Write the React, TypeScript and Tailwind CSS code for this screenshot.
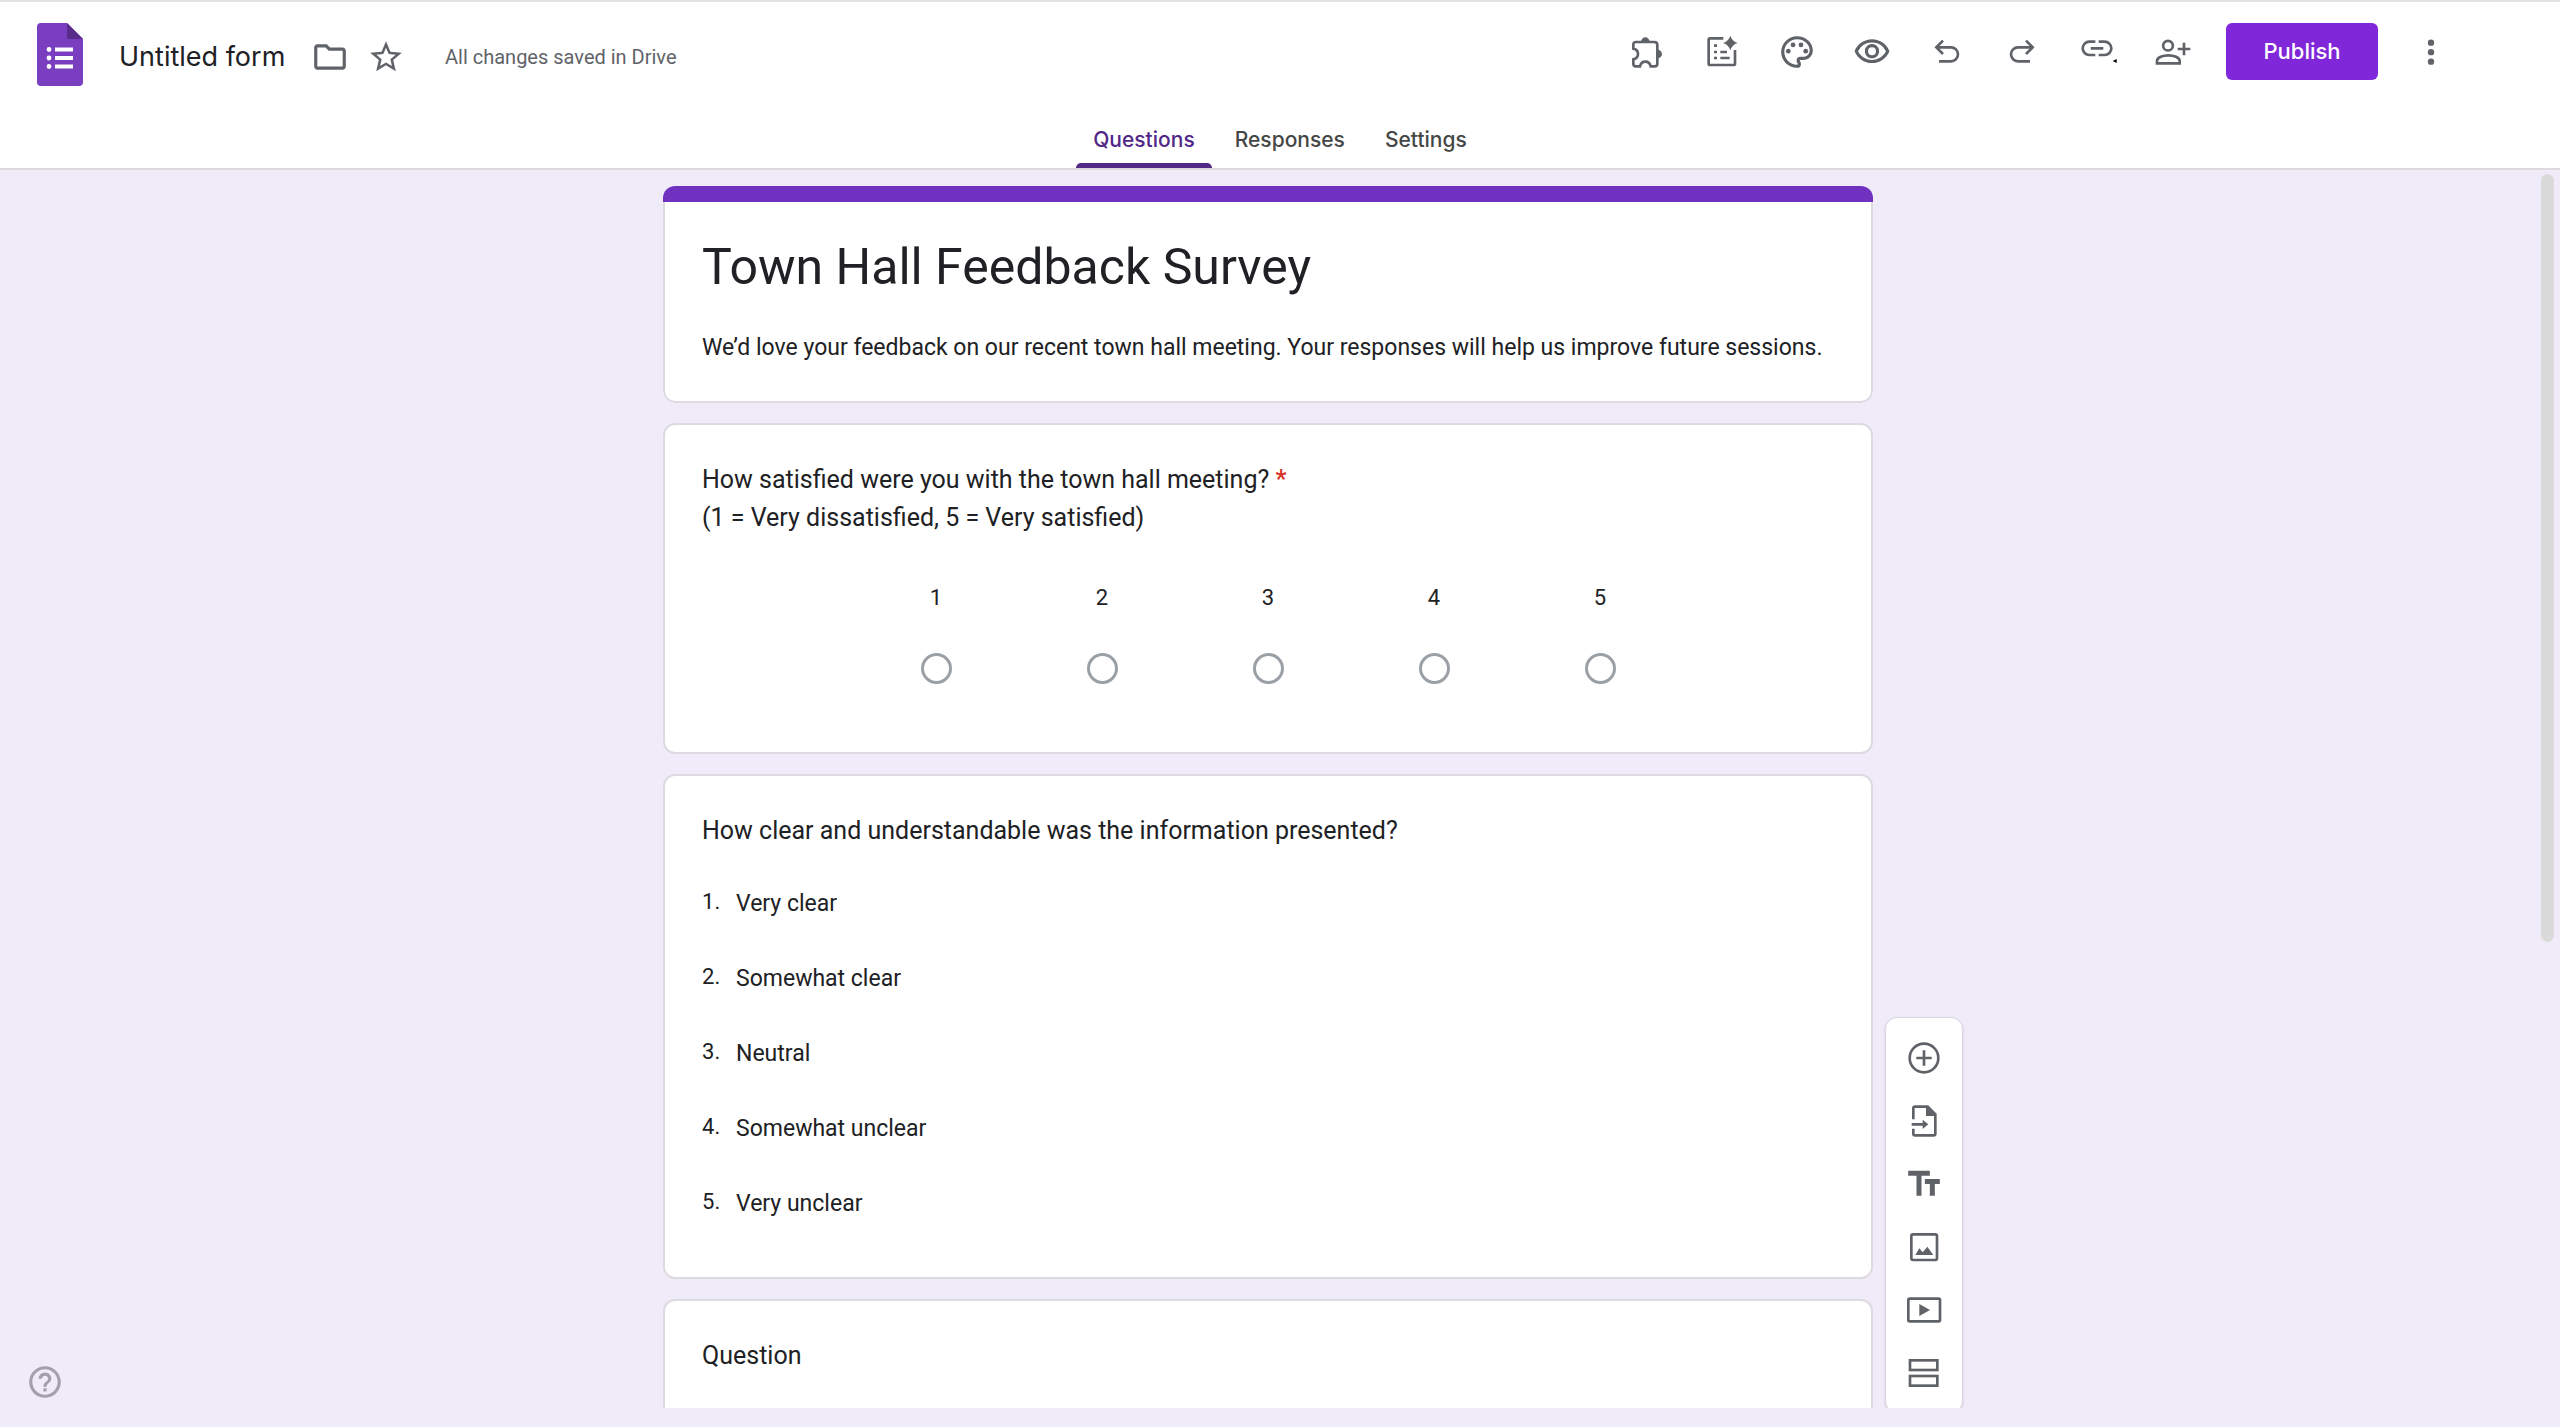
import React from "react";
import {
  MdHelpOutline,
  MdOutlineFolder,
  MdOutlinePalette,
  MdOutlineVisibility,
  MdStarBorder,
  MdTextFields,
} from "react-icons/md";

type IconProps = { viewBox: string; children: React.ReactNode };

function Icon({ viewBox, children }: IconProps) {
  return (
    <svg viewBox={viewBox} className="size-10" fill="none" stroke="currentColor" strokeWidth={8} aria-hidden="true">
      {children}
    </svg>
  );
}

const FormsLogo = () => (
  <svg viewBox="0 0 46 63" className="w-[46px] h-[63px]" aria-hidden="true">
    <path d="M4 0H30L46 16V59A4 4 0 0 1 42 63H4A4 4 0 0 1 0 59V4A4 4 0 0 1 4 0Z" fill="#7a3fc0" />
    <path d="M30 0L46 16H30Z" fill="#592c8c" />
    <g fill="#fff">
      <circle cx="12" cy="26.5" r="2.4" />
      <circle cx="12" cy="35" r="2.4" />
      <circle cx="12" cy="43.5" r="2.4" />
      <rect x="18" y="24.5" width="18" height="4" />
      <rect x="18" y="33" width="18" height="4" />
      <rect x="18" y="41.5" width="18" height="4" />
    </g>
  </svg>
);

const Puzzle = () => (
  <Icon viewBox="78 95 120 120">
    <path d="M105 125H160Q169 125 169 134V190Q169 198 160 198H149C147 189 141 184 133 184C125 184 119 189 117 198H105Q97 198 97 190V177C106 175 111 169 111 161C111 153 106 147 97 145V133Q97 125 105 125Z" />
    <path d="M120 125A13 14 0 0 1 146 125ZM169 148A14 13 0 0 1 169 174Z" fill="currentColor" stroke="none" />
  </Icon>
);

const FormSparkle = () => (
  <Icon viewBox="301 95 120 120">
    <path d="M365 114H325Q321 114 321 118V190Q321 194 325 194H395Q400 194 400 190V149" />
    <path d="M386 106Q391 123 408 128Q391 133 386 150Q381 133 364 128Q381 123 386 106Z" fill="currentColor" stroke="none" />
    <path d="M337 136H346M337 155H346M337 173H346M356 155H376M356 173H384" />
  </Icon>
);

const Undo = () => (
  <Icon viewBox="980 95 120 120">
    <path d="M1016 183H1052A21 21 0 0 0 1052 141H1008M1028 121L1008 141L1028 161" />
  </Icon>
);

const Redo = () => (
  <Icon viewBox="1204 95 120 120">
    <path d="M1288 183H1252A21 21 0 0 1 1252 141H1296M1276 121L1296 141L1276 161" />
  </Icon>
);

const LinkIcon = () => (
  <Icon viewBox="112 95 120 120">
    <path d="M167 124H149A20 20 0 0 0 149 164H167M177 124H195A20 20 0 0 1 195 164H177M153 144H191" />
    <path d="M219 182L231 176V188Z" fill="#000" stroke="none" />
  </Icon>
);

const PersonAdd = () => (
  <Icon viewBox="336 95 120 120">
    <circle cx="384" cy="136" r="14.5" />
    <path d="M351 189V182C351 171 369 165 385 165C401 165 419 171 419 182V189ZM413 146H451M432 127V165" />
  </Icon>
);

const Kebab = () => (
  <Icon viewBox="1113 95 120 120">
    <g fill="currentColor" stroke="none">
      <circle cx="1173" cy="127" r="9.5" />
      <circle cx="1173" cy="155.5" r="9.5" />
      <circle cx="1173" cy="184" r="9.5" />
    </g>
  </Icon>
);

const AddCircle = () => (
  <Icon viewBox="193 111 120 120">
    <circle cx="253" cy="171" r="43" />
    <path d="M230 171H276M253 148V194" />
  </Icon>
);

const ImportDoc = () => (
  <Icon viewBox="193 300 120 120">
    <path d="M221 355V322Q221 317 226 317H264L287 340V398Q287 403 282 403H226Q221 403 221 398V383M216 370H252" />
    <path d="M259 316V345H288ZM249 356L266 370L249 384Z" fill="currentColor" stroke="none" />
  </Icon>
);

const Picture = () => (
  <Icon viewBox="193 678 120 120">
    <rect x="215" y="700" width="77" height="77" rx="5" />
    <path d="M227 762L239 742L249 754L263 737L281 762Z" fill="currentColor" stroke="none" />
  </Icon>
);

const Video = () => (
  <Icon viewBox="193 865 120 120">
    <rect x="206" y="891" width="95" height="68" rx="4" />
    <path d="M239 907L271 925L239 943Z" fill="currentColor" stroke="none" />
  </Icon>
);

const Sections = () => (
  <Icon viewBox="193 1053 120 120">
    <rect x="211" y="1075" width="82" height="29" />
    <rect x="211" y="1122" width="82" height="29" />
  </Icon>
);

const headerActions = [
  { label: "Add-ons", icon: <Puzzle /> },
  { label: "Create with AI", icon: <FormSparkle /> },
  { label: "Customize theme", icon: <MdOutlinePalette className="size-[38px]" /> },
  { label: "Preview", icon: <MdOutlineVisibility className="size-[38px]" /> },
  { label: "Undo", icon: <Undo /> },
  { label: "Redo", icon: <Redo /> },
  { label: "Copy responder link", icon: <LinkIcon /> },
  { label: "Share", icon: <PersonAdd /> },
];

const toolbarActions = [
  { label: "Add question", icon: <AddCircle /> },
  { label: "Import questions", icon: <ImportDoc /> },
  { label: "Add title and description", icon: <MdTextFields className="size-10" /> },
  { label: "Add image", icon: <Picture /> },
  { label: "Add video", icon: <Video /> },
  { label: "Add section", icon: <Sections /> },
];

const options = ["Very clear", "Somewhat clear", "Neutral", "Somewhat unclear", "Very unclear"];

function Card({ children }: { children: React.ReactNode }) {
  return (
    <section className="shrink-0 rounded-xl border-2 border-[#dddae2] bg-white px-[37px] text-[25px] leading-[38px]">
      {children}
    </section>
  );
}

function Header() {
  return (
    <header className="relative border-y-2 border-t-[#e2e2e2] border-b-[#dcdadf] bg-white text-[#5f6368]">
      <div className="flex items-start justify-between pt-[21px] pr-[109px] pl-[37px]">
        <div className="flex items-center">
          <FormsLogo />
          <div className="flex items-center pt-1">
            <input
              aria-label="Form name"
              defaultValue="Untitled form"
              className="ml-9 w-[186px] bg-transparent font-['Inter'] text-[27px] leading-9 text-[#202124] outline-none"
            />
            <button aria-label="Move to folder" className="ml-1.5">
              <MdOutlineFolder className="size-[38px]" />
            </button>
            <button aria-label="Star" className="ml-[18px]">
              <MdStarBorder className="size-[38px]" />
            </button>
            <span className="ml-10 text-xl">All changes saved in Drive</span>
          </div>
        </div>
        <div className="flex items-center">
          {headerActions.map((a) => (
            <button key={a.label} aria-label={a.label} className="flex w-[75px] justify-center">
              {a.icon}
            </button>
          ))}
          <button className="ml-[17px] h-[57px] w-[152px] rounded-md bg-[#8027d9] font-['Inter'] text-[22px] font-medium text-white">
            Publish
          </button>
          <button aria-label="More options" className="ml-[33px]">
            <Kebab />
          </button>
        </div>
      </div>
      <nav className="mt-[26px] flex h-[56px] justify-center font-['Inter'] text-[21px] font-medium text-[#444746]" role="tablist">
        <button role="tab" aria-selected="true" className="relative px-5 text-[#512888]">
          Questions
          <span className="absolute inset-x-[3px] bottom-0 h-[5px] rounded-t-md bg-[#512888]" />
        </button>
        <button role="tab" aria-selected="false" className="px-5">Responses</button>
        <button role="tab" aria-selected="false" className="px-5">Settings</button>
      </nav>
    </header>
  );
}

export default function App() {
  return (
    <div className="flex h-screen flex-col overflow-hidden bg-[#f0ebf8] pb-[19px] font-['Roboto',sans-serif] text-[#202124]">
      <Header />
      <main className="relative grid min-h-0 flex-1 grid-cols-[1fr_minmax(0,1210px)_1fr] grid-rows-[minmax(0,1fr)] overflow-hidden pr-6">
        <div className="col-start-2 flex flex-col gap-5 pt-4">
          <section className="shrink-0 overflow-hidden rounded-xl bg-white">
            <div className="h-4 bg-[#7030c0]" />
            <div className="rounded-b-xl border-2 border-t-0 border-[#dddae2] px-[37px] pt-8 pb-[34px]">
              <h1 className="text-[50px] leading-[66px]">Town Hall Feedback Survey</h1>
              <p className="mt-[29px] text-[23px] leading-[38px]">
                We’d love your feedback on our recent town hall meeting. Your responses will help us improve future
                sessions.
              </p>
            </div>
          </section>

          <Card>
            <fieldset className="pt-9 pb-[68px]">
              <legend className="float-left w-full">
                How satisfied were you with the town hall meeting? <span className="font-medium text-[#d93025]">*</span>
                <br />
                (1 = Very dissatisfied, 5 = Very satisfied)
              </legend>
              <div className="clear-both flex justify-center pt-[42px]">
                {[1, 2, 3, 4, 5].map((n) => (
                  <label key={n} className="flex w-[166px] flex-col items-center gap-9 text-[22px]">
                    {n}
                    <input
                      type="radio"
                      name="satisfaction"
                      value={n}
                      className="size-[31px] appearance-none rounded-full border-3 border-[#9aa0a6] checked:border-[#7030c0]"
                    />
                  </label>
                ))}
              </div>
            </fieldset>
          </Card>

          <Card>
            <h2 className="pt-9">How clear and understandable was the information presented?</h2>
            <ol className="mt-4 pb-9 text-[23px]">
              {options.map((o, i) => (
                <li key={o} className="flex h-[75px] items-center">
                  <span className="w-[34px] pb-1 text-[22px]">{i + 1}.</span>
                  {o}
                </li>
              ))}
            </ol>
          </Card>

          <Card>
            <h2 className="pt-9 pb-20">Question</h2>
          </Card>
        </div>

        <aside
          aria-label="Form tools"
          className="col-start-3 -mb-[5px] ml-3 flex w-[78px] flex-col self-end justify-self-start rounded-xl border border-[#dad6de] bg-white py-2 text-[#5f6368] shadow"
        >
          {toolbarActions.map((a) => (
            <button key={a.label} aria-label={a.label} className="flex h-[63px] items-center justify-center">
              {a.icon}
            </button>
          ))}
        </aside>
        <div className="absolute top-1 right-[6px] h-[62%] w-[13px] rounded-full bg-[#dadada]" />
      </main>
      <button aria-label="Help" className="absolute bottom-[26px] left-[26px] text-[#a39fac]">
        <MdHelpOutline className="size-[38px]" />
      </button>
    </div>
  );
}
